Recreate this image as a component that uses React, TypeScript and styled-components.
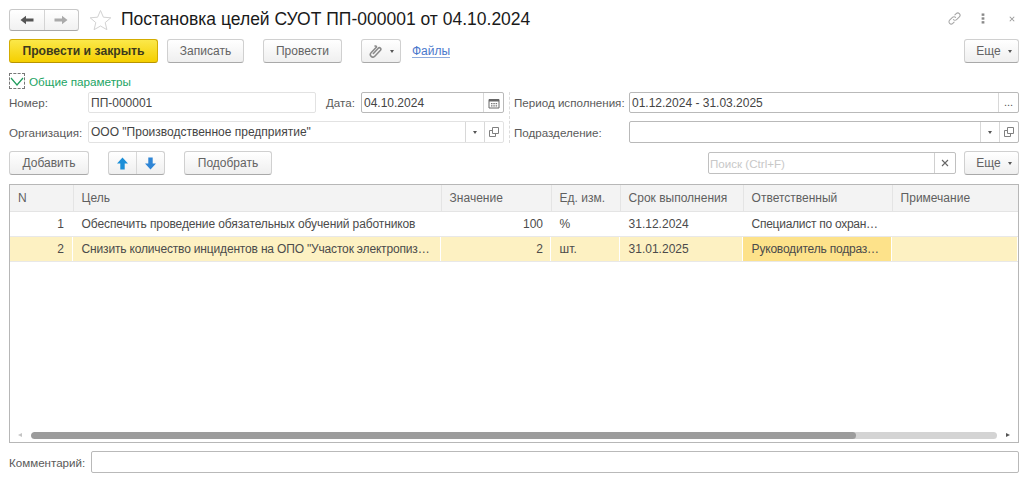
import React from 'react';
import styled, { createGlobalStyle, css } from 'styled-components';

const columns = '63px 368px 110px 69px 123px 149px 1fr';

function Caret() {
  return <CaretMark />;
}

function App() {
  return (
    <Page>
      <GlobalStyle />
      <TitleRow>
        <NavGroup>
          <NavButton>
            <svg width="14" height="10" viewBox="0 0 14 10"><path d="M0.5 5 L6 0.8 V3.6 H13.5 V6.4 H6 V9.2 Z" fill="#555" /></svg>
          </NavButton>
          <NavButton>
            <svg width="14" height="10" viewBox="0 0 14 10"><path d="M13.5 5 L8 0.8 V3.6 H0.5 V6.4 H8 V9.2 Z" fill="#aaa" /></svg>
          </NavButton>
        </NavGroup>
        <StarIcon width="23" height="22" viewBox="0 0 23 22">
          <path d="M11.5 1.5 L14.4 8.2 L21.8 8.8 L16.2 13.6 L17.9 20.7 L11.5 17 L5.1 20.7 L6.8 13.6 L1.2 8.8 L8.6 8.2 Z" fill="#fff" stroke="#d2d2d2" strokeWidth="1" />
        </StarIcon>
        <Title>Постановка целей СУОТ ПП-000001 от 04.10.2024</Title>
        <WindowIcons>
          <svg width="15" height="15" viewBox="0 0 16 16" fill="none" stroke="#a6a6a6" strokeWidth="1.1" strokeLinecap="round">
            <path d="M6.8 9.2 a2.4 2.4 0 0 0 3.4 0 l3 -3 a2.4 2.4 0 0 0 -3.4 -3.4 l-1.4 1.4" />
            <path d="M9.2 6.8 a2.4 2.4 0 0 0 -3.4 0 l-3 3 a2.4 2.4 0 0 0 3.4 3.4 l1.4 -1.4" />
          </svg>
          <svg width="4" height="11" viewBox="0 0 4 12" fill="#8a8a8a">
            <rect x="0.5" y="0.5" width="3" height="2.6" />
            <rect x="0.5" y="4.7" width="3" height="2.6" />
            <rect x="0.5" y="8.9" width="3" height="2.6" />
          </svg>
          <svg width="6" height="6" viewBox="0 0 8 8" stroke="#9a9a9a" strokeWidth="1.4"><path d="M1 1 L7 7 M7 1 L1 7" /></svg>
        </WindowIcons>
      </TitleRow>

      <CommandBar>
        <PrimaryButton>Провести и закрыть</PrimaryButton>
        <Button $width={77} $ml={9}>Записать</Button>
        <Button $width={79} $ml={19}>Провести</Button>
        <Button $width={40} $ml={19}>
          <svg width="14" height="14" viewBox="0 0 16 16" fill="none" stroke="#8a8a8a" strokeWidth="1.8" strokeLinecap="round">
            <path d="M5 10.5 L10.6 4.4 a1.7 1.7 0 0 1 2.5 2.3 L6.6 13.6 a2.9 2.9 0 0 1 -4.2 -4 L8.6 3 a1.2 1.2 0 0 0 -1.6 -1" transform="translate(0 0.4)" />
          </svg>
          <Caret />
        </Button>
        <FilesLink>Файлы</FilesLink>
        <MoreButton $width={55} $push>
          Еще
          <Caret />
        </MoreButton>
      </CommandBar>

      <GroupHeader>
        <ChevronBox>
          <svg width="14" height="9" viewBox="0 0 14 9" fill="none" stroke="#1f9b5c" strokeWidth="1.2"><path d="M1 1 L7 8 L13 1" /></svg>
        </ChevronBox>
        Общие параметры
      </GroupHeader>

      <FieldGrid>
        <FieldColumn>
          <FieldRow $height={21}>
            <FieldLabel $width={79}>Номер:</FieldLabel>
            <Input $width={228} $soft>ПП-000001</Input>
            <FieldLabel $width={35} $ml={10}>Дата:</FieldLabel>
            <Input $grow>
              <InputText>04.10.2024</InputText>
              <InputAddon $wide>
                <svg width="12" height="12" viewBox="0 0 12 12">
                  <path d="M1 2.5 H11 V11 H1 Z" fill="none" stroke="#666" />
                  <path d="M1 2 H11 V4.5 H1 Z" fill="#666" />
                  <path d="M3 6 H4.5 V7.2 H3 Z M5.3 6 H6.8 V7.2 H5.3 Z M7.6 6 H9.1 V7.2 H7.6 Z M3 8.3 H4.5 V9.5 H3 Z M5.3 8.3 H6.8 V9.5 H5.3 Z M7.6 8.3 H9.1 V9.5 H7.6 Z" fill="#777" />
                </svg>
              </InputAddon>
            </Input>
          </FieldRow>
          <FieldRow $height={22}>
            <FieldLabel $width={79}>Организация:</FieldLabel>
            <Input $grow $soft>
              <InputText>ООО "Производственное предприятие"</InputText>
              <SelectAddons />
            </Input>
          </FieldRow>
        </FieldColumn>
        <FieldColumn $divided>
          <FieldRow $height={21}>
            <FieldLabel $width={115}>Период исполнения:</FieldLabel>
            <Input $grow>
              <InputText>01.12.2024 - 31.03.2025</InputText>
              <InputAddon $wide><Dots>...</Dots></InputAddon>
            </Input>
          </FieldRow>
          <FieldRow $height={22}>
            <FieldLabel $width={115}>Подразделение:</FieldLabel>
            <Input $grow>
              <InputText />
              <SelectAddons />
            </Input>
          </FieldRow>
        </FieldColumn>
      </FieldGrid>

      <TableBar>
        <Button $width={80}>Добавить</Button>
        <ArrowGroup>
          <ArrowButton>
            <svg width="13" height="13" viewBox="0 0 13 13"><path d="M6.5 0.5 L12 6.5 H8.7 V12.5 H4.3 V6.5 H1 Z" fill="#1c8fd8" /></svg>
          </ArrowButton>
          <ArrowButton>
            <svg width="13" height="13" viewBox="0 0 13 13"><path d="M6.5 12.5 L12 6.5 H8.7 V0.5 H4.3 V6.5 H1 Z" fill="#2f86d6" /></svg>
          </ArrowButton>
        </ArrowGroup>
        <Button $width={88} $ml={19}>Подобрать</Button>
        <SearchBox>
          <SearchText>Поиск (Ctrl+F)</SearchText>
          <SearchClear>
            <svg width="8" height="8" viewBox="0 0 8 8" stroke="#666" strokeWidth="1.1"><path d="M1 1 L7 7 M7 1 L1 7" /></svg>
          </SearchClear>
        </SearchBox>
        <MoreButton $width={55} $ml={8}>
          Еще
          <Caret />
        </MoreButton>
      </TableBar>

      <TablePanel>
        <HeaderRow>
          <HeadCell>N</HeadCell>
          <HeadCell>Цель</HeadCell>
          <HeadCell>Значение</HeadCell>
          <HeadCell>Ед. изм.</HeadCell>
          <HeadCell>Срок выполнения</HeadCell>
          <HeadCell>Ответственный</HeadCell>
          <HeadCell>Примечание</HeadCell>
        </HeaderRow>
        <DataRow>
          <Cell $right={8}>1</Cell>
          <Cell $track={-0.11}>Обеспечить проведение обязательных обучений работников</Cell>
          <Cell $right={7}>100</Cell>
          <Cell>%</Cell>
          <Cell>31.12.2024</Cell>
          <Cell $track={-0.27}>Специалист по охран…</Cell>
          <Cell />
        </DataRow>
        <DataRow $selected>
          <Cell $right={8}>2</Cell>
          <Cell $track={-0.17}>Снизить количество инцидентов на ОПО "Участок электропиз…</Cell>
          <Cell $right={7}>2</Cell>
          <Cell>шт.</Cell>
          <Cell>31.01.2025</Cell>
          <Cell $current $track={-0.2}>Руководитель подраз…</Cell>
          <Cell />
        </DataRow>
        <TableSpace />
        <ScrollBar>
          <ScrollArrow $side="left" />
          <ScrollTrack>
            <ScrollThumb />
          </ScrollTrack>
          <ScrollArrow $side="right" />
        </ScrollBar>
      </TablePanel>

      <CommentRow>
        <FieldLabel $width={82}>Комментарий:</FieldLabel>
        <Input $grow />
      </CommentRow>
    </Page>
  );
}

function SelectAddons() {
  return (
    <>
      <InputAddon><Caret /></InputAddon>
      <InputAddon>
        <svg width="10" height="10" viewBox="0 0 10 10" fill="none" stroke="#808080">
          <path d="M3.5 0.5 H9.5 V6.5 H3.5 Z" />
          <path d="M3.5 3.5 H0.5 V9.5 H6.5 V6.5" />
        </svg>
      </InputAddon>
    </>
  );
}

const GlobalStyle = createGlobalStyle`
  html, body {
    margin: 0;
    background: #fff;
  }
`;

const Page = styled.div`
  width: 1024px;
  height: 484px;
  box-sizing: border-box;
  padding: 8px 5px 0 9px;
  display: flex;
  flex-direction: column;
  overflow: hidden;
  font-family: "Liberation Sans", Arial, sans-serif;
  font-size: 12px;
  color: #4b4b4b;
`;

const TitleRow = styled.div`
  display: flex;
  align-items: center;
  height: 23px;
`;

const NavGroup = styled.div`
  display: flex;
  width: 70px;
  height: 22px;
  box-sizing: border-box;
  border: 1px solid #c8c8c8;
  border-bottom-color: #a8a8a8;
  border-radius: 3px;
  background: linear-gradient(#ffffff, #f1f1f1);
`;

const NavButton = styled.div`
  flex: 1;
  display: flex;
  align-items: center;
  justify-content: center;
  & + & {
    border-left: 1px solid #d4d4d4;
  }
`;

const StarIcon = styled.svg`
  margin-left: 10px;
`;

const Title = styled.div`
  margin-left: 9px;
  font-size: 17.5px;
  color: #1a1a1a;
  white-space: nowrap;
`;

const WindowIcons = styled.div`
  margin-left: auto;
  margin-bottom: 2px;
  display: flex;
  align-items: center;
  gap: 19px;
  padding-right: 4px;
  & > svg:last-child {
    margin-left: 5px;
  }
`;

const buttonBase = css`
  height: 24px;
  box-sizing: border-box;
  display: flex;
  align-items: center;
  justify-content: center;
  border-radius: 3px;
  flex: none;
  white-space: nowrap;
`;

const CommandBar = styled.div`
  display: flex;
  align-items: center;
  margin-top: 8px;
`;

const PrimaryButton = styled.div`
  ${buttonBase}
  width: 149px;
  border: 1px solid #d3ac00;
  border-bottom-color: #b89400;
  background: linear-gradient(#fbe84a, #f5cf00);
  color: #3d3a1c;
  font-size: 12.2px;
  font-weight: bold;
`;

const Button = styled.div<{ $width: number; $ml?: number; $push?: boolean }>`
  ${buttonBase}
  width: ${(p) => p.$width}px;
  margin-left: ${(p) => (p.$push ? 'auto' : `${p.$ml ?? 0}px`)};
  border: 1px solid #d0d0d0;
  border-bottom-color: #a9a9a9;
  background: linear-gradient(#ffffff, #efefef);
  color: #636363;
`;

const MoreButton = styled(Button)`
  padding-left: 5px;
`;

const CaretMark = styled.span`
  display: inline-block;
  margin-left: 7px;
  width: 0;
  height: 0;
  border-left: 2.5px solid transparent;
  border-right: 2.5px solid transparent;
  border-top: 3px solid #555;
`;

const FilesLink = styled.a`
  margin-left: 11px;
  color: #4a78cc;
  border-bottom: 1px solid #8fabdc;
  line-height: 12px;
  margin-top: 1px;
`;

const GroupHeader = styled.div`
  display: flex;
  align-items: center;
  margin-top: 10px;
  height: 16px;
  font-size: 11.7px;
  color: #22a463;
`;

const ChevronBox = styled.div`
  width: 16px;
  height: 16px;
  box-sizing: border-box;
  border: 1px dashed #777;
  margin-right: 4px;
  display: flex;
  align-items: center;
  justify-content: center;
`;

const FieldGrid = styled.div`
  display: grid;
  grid-template-columns: 495px 1fr;
  margin-top: 3px;
`;

const FieldColumn = styled.div<{ $divided?: boolean }>`
  display: flex;
  flex-direction: column;
  gap: 8px;
  ${(p) =>
    p.$divided &&
    css`
      margin-left: 5px;
      padding-left: 4px;
      border-left: 1px dashed #dcdcdc;
    `}
`;

const FieldRow = styled.div<{ $height: number }>`
  display: flex;
  align-items: center;
  height: ${(p) => p.$height}px;
`;

const FieldLabel = styled.div<{ $width: number; $ml?: number }>`
  flex: none;
  width: ${(p) => p.$width}px;
  margin-left: ${(p) => p.$ml ?? 0}px;
  font-size: 11.6px;
  color: #5a5a5a;
  white-space: nowrap;
`;

const Input = styled.div<{ $width?: number; $grow?: boolean; $soft?: boolean }>`
  ${(p) => (p.$grow ? 'flex: 1;' : `width: ${p.$width}px;`)}
  height: 100%;
  box-sizing: border-box;
  display: flex;
  align-items: center;
  padding-left: ${(p) => (p.$width ? '2px' : '0')};
  border: 1px solid ${(p) => (p.$soft ? '#e2e2e2' : '#b9b9b9')};
  border-radius: 2px;
  background: #fff;
  color: #444;
  font-size: 12px;
`;

const InputText = styled.div`
  flex: 1;
  padding-left: 2px;
  white-space: nowrap;
`;

const InputAddon = styled.div<{ $wide?: boolean }>`
  width: ${(p) => (p.$wide ? 20 : 19)}px;
  height: 100%;
  box-sizing: border-box;
  display: flex;
  align-items: center;
  justify-content: center;
  border-left: 1px solid #d8d8d8;
  & > span {
    margin-left: 0;
  }
`;

const Dots = styled.span`
  margin-top: -1px;
  color: #555;
  font-size: 11px;
  letter-spacing: 0;
`;

const TableBar = styled.div`
  display: flex;
  align-items: center;
  margin-top: 8px;
`;

const ArrowGroup = styled.div`
  ${buttonBase}
  width: 57px;
  margin-left: 19px;
  border: 1px solid #d0d0d0;
  border-bottom-color: #a9a9a9;
  background: linear-gradient(#ffffff, #efefef);
`;

const ArrowButton = styled.div`
  flex: 1;
  height: 100%;
  display: flex;
  align-items: center;
  justify-content: center;
  & + & {
    border-left: 1px solid #d8d8d8;
  }
`;

const SearchBox = styled.div`
  margin-left: auto;
  width: 248px;
  height: 22px;
  box-sizing: border-box;
  display: flex;
  align-items: center;
  border: 1px solid #c0c0c0;
  border-radius: 2px;
`;

const SearchText = styled.div`
  flex: 1;
  padding-left: 1px;
  font-size: 11.6px;
  color: #c8c8c8;
`;

const SearchClear = styled.div`
  width: 20px;
  height: 100%;
  display: flex;
  align-items: center;
  justify-content: center;
  border-left: 1px solid #d0d0d0;
`;

const TablePanel = styled.div`
  margin-top: 9px;
  height: 259px;
  box-sizing: border-box;
  display: flex;
  flex-direction: column;
  border: 1px solid #b7b7b7;
`;

const HeaderRow = styled.div`
  display: grid;
  grid-template-columns: ${columns};
  height: 27px;
  background: #f3f3f3;
  border-bottom: 1px solid #e4e4e4;
  box-sizing: border-box;
`;

const HeadCell = styled.div`
  display: flex;
  align-items: center;
  padding-left: 8px;
  color: #5f5f5f;
  white-space: nowrap;
  & + & {
    padding-left: 7.6px;
    border-left: 1px solid #e4e4e4;
  }
`;

const DataRow = styled.div<{ $selected?: boolean }>`
  display: grid;
  grid-template-columns: ${columns};
  height: 25px;
  box-sizing: border-box;
  border-bottom: 1px solid #e8e8e8;
  background: ${(p) => (p.$selected ? '#fdf1c2' : '#fff')};
`;

const Cell = styled.div<{ $right?: number; $current?: boolean; $track?: number }>`
  display: flex;
  align-items: center;
  justify-content: ${(p) => (p.$right ? 'flex-end' : 'flex-start')};
  padding: ${(p) => (p.$right ? `0 ${p.$right}px 0 0` : '0 0 0 8.6px')};
  letter-spacing: ${(p) => p.$track ?? 0}px;
  color: #4b4b4b;
  white-space: nowrap;
  overflow: hidden;
  border-right: 1px solid #fff;
  ${(p) => p.$current && 'background: #fde28a;'}
`;

const TableSpace = styled.div`
  flex: 1;
`;

const ScrollBar = styled.div`
  display: flex;
  align-items: center;
  height: 14px;
  padding-left: 8px;
`;

const ScrollArrow = styled.div<{ $side: 'left' | 'right' }>`
  width: 0;
  height: 0;
  border-top: 2.5px solid transparent;
  border-bottom: 2.5px solid transparent;
  ${(p) =>
    p.$side === 'left'
      ? 'border-right: 4px solid #c4c4c4; margin-right: 9px;'
      : 'border-left: 4px solid #555; margin-left: 9px;'}
`;

const ScrollTrack = styled.div`
  width: 966px;
  height: 7px;
  border-radius: 4px;
  background: #d4d4d4;
  overflow: hidden;
`;

const ScrollThumb = styled.div`
  width: 825px;
  height: 100%;
  border-radius: 4px;
  background: #9c9c9c;
`;

const CommentRow = styled.div`
  display: flex;
  align-items: center;
  margin-top: 8px;
  height: 22px;
`;

export default App;
